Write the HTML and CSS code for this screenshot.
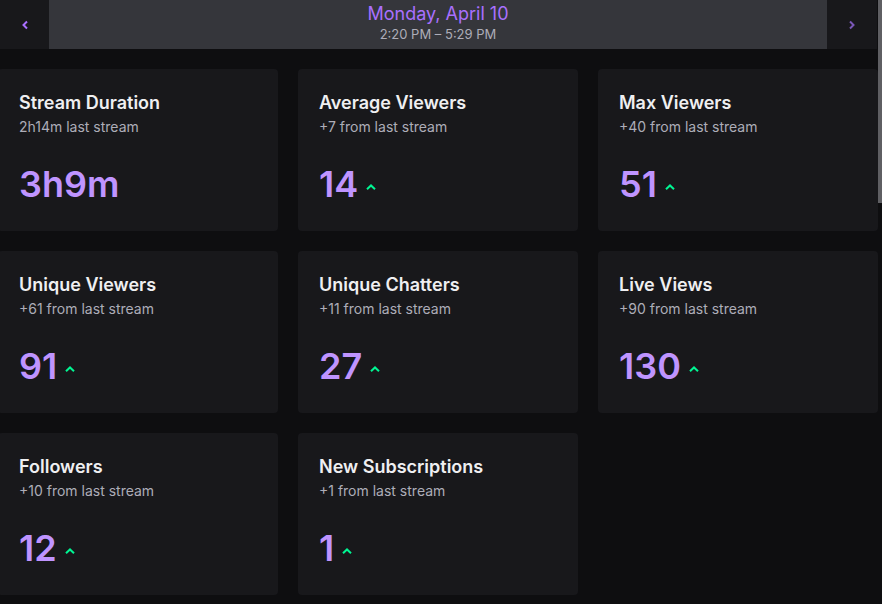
FILE: index.html
```html
<!DOCTYPE html>
<html>
<head>
<meta charset="utf-8">
<link rel="stylesheet" href="styles.css">
</head>
<body>
<div class="scroll-thumb"></div>
<header class="topbar">
  <button class="nav-btn">
    <svg width="8" height="10" viewBox="0 0 8 10"><path d="M6 1.5 L2.5 5 L6 8.5" fill="none" stroke="#a970ff" stroke-width="2"/></svg>
  </button>
  <div class="date">
    <div class="date-main">Monday, April 10</div>
    <div class="date-sub">2:20 PM – 5:29 PM</div>
  </div>
  <button class="nav-btn nav-btn-right">
    <svg width="8" height="10" viewBox="0 0 8 10"><path d="M2 1.5 L5.5 5 L2 8.5" fill="none" stroke="#7a57b8" stroke-width="2"/></svg>
  </button>
</header>
<main class="grid">
  <section class="card">
    <h2 class="card-title">Stream Duration</h2>
    <p class="card-sub">2h14m last stream</p>
    <div class="card-value"><span class="num">3h9m</span></div>
  </section>
  <section class="card">
    <h2 class="card-title">Average Viewers</h2>
    <p class="card-sub">+7 from last stream</p>
    <div class="card-value"><span class="num">14</span><svg class="up" width="10" height="6" viewBox="0 0 10 6"><path d="M1 5.2 L5 1.4 L9 5.2" fill="none" stroke="#00f593" stroke-width="2"/></svg></div>
  </section>
  <section class="card">
    <h2 class="card-title">Max Viewers</h2>
    <p class="card-sub">+40 from last stream</p>
    <div class="card-value"><span class="num">51</span><svg class="up" width="10" height="6" viewBox="0 0 10 6"><path d="M1 5.2 L5 1.4 L9 5.2" fill="none" stroke="#00f593" stroke-width="2"/></svg></div>
  </section>
  <section class="card">
    <h2 class="card-title">Unique Viewers</h2>
    <p class="card-sub">+61 from last stream</p>
    <div class="card-value"><span class="num">91</span><svg class="up" width="10" height="6" viewBox="0 0 10 6"><path d="M1 5.2 L5 1.4 L9 5.2" fill="none" stroke="#00f593" stroke-width="2"/></svg></div>
  </section>
  <section class="card">
    <h2 class="card-title">Unique Chatters</h2>
    <p class="card-sub">+11 from last stream</p>
    <div class="card-value"><span class="num">27</span><svg class="up" width="10" height="6" viewBox="0 0 10 6"><path d="M1 5.2 L5 1.4 L9 5.2" fill="none" stroke="#00f593" stroke-width="2"/></svg></div>
  </section>
  <section class="card">
    <h2 class="card-title">Live Views</h2>
    <p class="card-sub">+90 from last stream</p>
    <div class="card-value"><span class="num">130</span><svg class="up" width="10" height="6" viewBox="0 0 10 6"><path d="M1 5.2 L5 1.4 L9 5.2" fill="none" stroke="#00f593" stroke-width="2"/></svg></div>
  </section>
  <section class="card">
    <h2 class="card-title">Followers</h2>
    <p class="card-sub">+10 from last stream</p>
    <div class="card-value"><span class="num">12</span><svg class="up" width="10" height="6" viewBox="0 0 10 6"><path d="M1 5.2 L5 1.4 L9 5.2" fill="none" stroke="#00f593" stroke-width="2"/></svg></div>
  </section>
  <section class="card">
    <h2 class="card-title">New Subscriptions</h2>
    <p class="card-sub">+1 from last stream</p>
    <div class="card-value"><span class="num">1</span><svg class="up" width="10" height="6" viewBox="0 0 10 6"><path d="M1 5.2 L5 1.4 L9 5.2" fill="none" stroke="#00f593" stroke-width="2"/></svg></div>
  </section>
</main>
</body>
</html>
```

FILE: styles.css
```css
* { box-sizing: border-box; }
html, body {
  margin: 0;
  padding: 0;
  background: #0e0e10;
  overflow: hidden;
  font-family: Inter, "Noto Sans", sans-serif;
}
.scroll-thumb {
  position: fixed;
  top: 0;
  right: 0;
  width: 4px;
  height: 203px;
  background: #5f5f63;
}
.topbar {
  display: flex;
  height: 49px;
  margin-right: 5px;
}
.nav-btn {
  width: 49px;
  border: 0;
  padding: 0;
  background: #18181b;
  display: flex;
  align-items: center;
  justify-content: center;
}
.nav-btn-right { width: 50px; }
.date {
  flex: 1;
  background: #35363b;
  text-align: center;
  padding-top: 3px;
}
.date-main {
  color: #a970ff;
  font-size: 18px;
  line-height: 22px;
}
.date-sub {
  color: #adadb8;
  font-size: 13px;
  line-height: 18px;
}
.grid {
  display: grid;
  grid-template-columns: repeat(3, 280px);
  gap: 20px;
  margin: 20px 0 0 -2px;
}
.card {
  height: 162px;
  background: #18181b;
  border-radius: 4px;
  padding: 23px 21px;
}
.card-title {
  margin: 0;
  color: #efeff1;
  font-size: 18px;
  font-weight: 600;
  line-height: 22px;
}
.card-sub {
  margin: 3px 0 0;
  color: #adadb8;
  font-size: 14px;
  line-height: 20px;
}
.card-value {
  margin-top: 25px;
  display: flex;
  align-items: center;
  gap: 8px;
}
.num {
  color: #bf94ff;
  font-size: 36px;
  font-weight: 600;
  line-height: 44px;
}
.up { margin-top: 6px; }
```
